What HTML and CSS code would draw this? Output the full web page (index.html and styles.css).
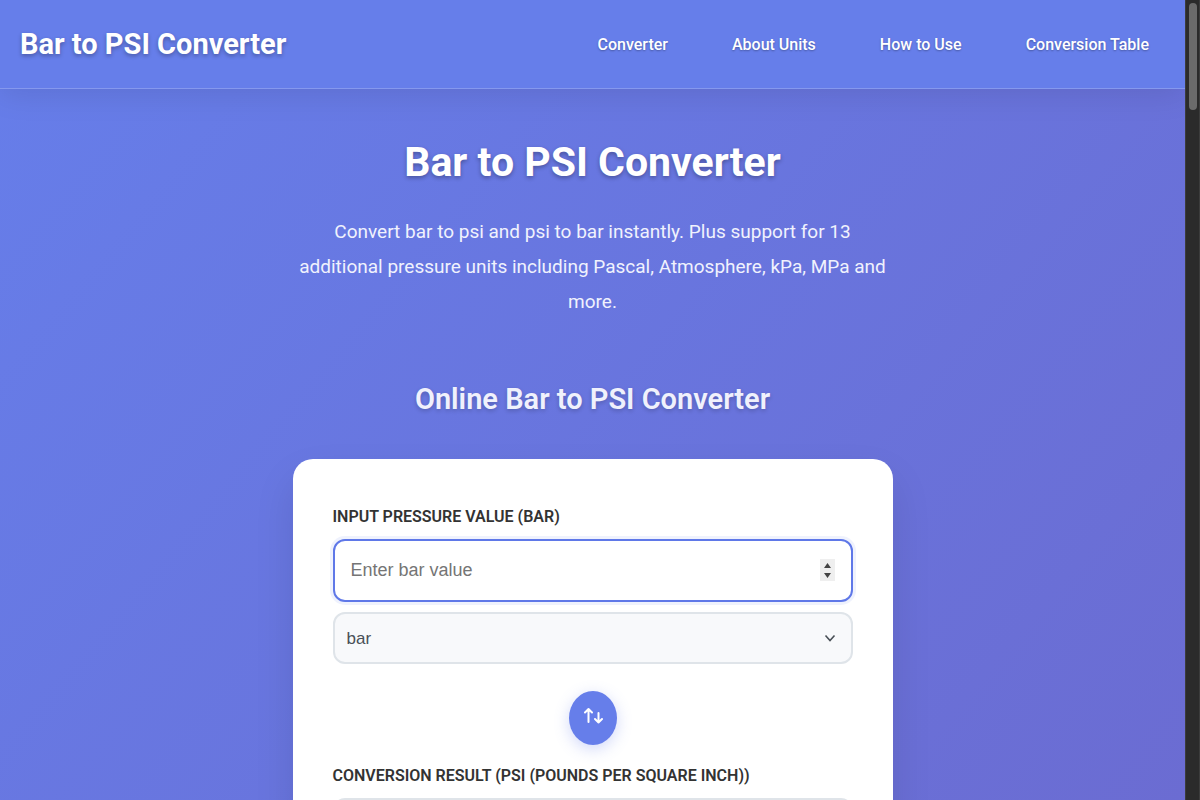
FILE: index.html
```html
<!DOCTYPE html>
<html lang="en">
<head>
<meta charset="utf-8">
<title>Bar to PSI Converter</title>
<link rel="stylesheet" href="styles.css">
</head>
<body>
<div class="page">
  <header class="header">
    <div class="logo">Bar to PSI Converter</div>
    <nav class="nav">
      <a href="#converter">Converter</a>
      <a href="#units">About Units</a>
      <a href="#how">How to Use</a>
      <a href="#table">Conversion Table</a>
    </nav>
  </header>
  <main class="main">
    <h1 class="title">Bar to PSI Converter</h1>
    <p class="subtitle">Convert bar to psi and psi to bar instantly. Plus support for 13 additional pressure units including Pascal, Atmosphere, kPa, MPa and more.</p>
    <h2 class="section-title">Online Bar to PSI Converter</h2>
    <form class="card" id="converter">
      <label class="label" for="value">Input pressure value (bar)</label>
      <div class="field">
        <input class="input active" id="value" type="number" placeholder="Enter bar value">
        <svg class="spinner" viewBox="0 0 15 22" aria-hidden="true"><path class="spinner-bg" d="M0 0h15v22H0z"/><path d="M4 9l3.500-5L11 9zM4 14h7l-3.500 5z"/></svg>
      </div>
      <div class="field">
        <select class="select" aria-label="Input unit"><option>bar</option><option>psi</option></select>
        <svg class="chevron" viewBox="0 0 12 10" aria-hidden="true"><path d="M1.500 2.500l4.500 5 4.500-5"/></svg>
      </div>
      <button class="swap" type="button" aria-label="Swap units">
        <svg viewBox="0 0 20 18" aria-hidden="true"><path d="M5.500 15V2.500M2 5.500l3.500-3.500L9 5.500M15.500 6v9.500M12 12l3.500 3.500 3.500-3.500"/></svg>
      </button>
      <label class="label" for="result">Conversion result (psi (pounds per square inch))</label>
      <input class="input" id="result" type="text" readonly>
    </form>
  </main>
</div>
<div class="scrollbar"><div class="thumb"></div></div>
</body>
</html>
```
FILE: styles.css
```css
* {
  box-sizing: border-box;
}

body {
  margin: 0;
  display: flex;
  height: 100vh;
  overflow: hidden;
  font-family: Roboto, "Liberation Sans", sans-serif;
  color: #333;
}

.page {
  flex: 1;
  min-width: 0;
  overflow: hidden;
  background: linear-gradient(130deg, #667eea 0%, #6b6cd2 100%);
}

.header {
  display: flex;
  align-items: center;
  justify-content: space-between;
  height: 89px;
  padding: 0 36px 0 20px;
  background: #667eea;
  border-bottom: 1px solid #8598ee;
  box-shadow: 0 4px 32px rgba(0, 0, 0, 0.1);
  color: #fff;
}

.logo {
  font-size: 29px;
  font-weight: 700;
  line-height: 36px;
  text-shadow: 0 2px 4px rgba(0, 0, 0, 0.3);
}

.nav {
  display: flex;
  gap: 64px;
}

.nav a {
  color: #fff;
  font-size: 16px;
  font-weight: 500;
  text-decoration: none;
  text-shadow: 0 1px 2px rgba(0, 0, 0, 0.3);
}

.main {
  display: flex;
  flex-direction: column;
  align-items: center;
  padding: 45px 20px;
}

.title {
  margin: 0 0 24px;
  font-size: 41px;
  line-height: 56px;
  color: #fff;
  text-shadow: 0 2px 4px rgba(0, 0, 0, 0.3);
}

.subtitle {
  max-width: 600px;
  margin: 0 0 56px;
  font-size: 19px;
  line-height: 35px;
  text-align: center;
  color: #f0f2fd;
}

.section-title {
  margin: 0 0 36px;
  font-size: 29px;
  font-weight: 600;
  line-height: 48px;
  color: #f0f1fc;
  text-shadow: 0 2px 4px rgba(0, 0, 0, 0.2);
}

.card {
  display: flex;
  flex-direction: column;
  width: 100%;
  max-width: 600px;
  padding: 44px 40px;
  background: #fff;
  border-radius: 20px;
  box-shadow: 0 20px 40px rgba(0, 0, 0, 0.1);
}

.label {
  margin-bottom: 8px;
  font-size: 16px;
  font-weight: 600;
  line-height: 28px;
  text-transform: uppercase;
}

.field {
  position: relative;
  display: flex;
  margin-bottom: 10px;
}

.input,
.select {
  width: 100%;
  appearance: none;
  border: 2px solid #dfe4e9;
  border-radius: 12px;
  outline: none;
  font-family: "Liberation Sans", Arial, sans-serif;
}

.input {
  height: 63px;
  padding: 0 16px;
  background: #f8f9fb;
  font-size: 18px;
}

.input.active {
  background: #fff;
  border-color: #5f78e8;
  box-shadow: 0 0 0 3px rgba(102, 126, 234, 0.1);
}

.input::-webkit-inner-spin-button {
  appearance: none;
}

.input::placeholder {
  color: #757575;
}

.select {
  height: 52px;
  padding: 0 12px;
  background: #f8f9fb;
  color: #495057;
  font-size: 17px;
}

.spinner {
  position: absolute;
  top: 20px;
  right: 18px;
  width: 15px;
  height: 22px;
  fill: #444;
}

.spinner-bg {
  fill: #efefef;
}

.chevron {
  position: absolute;
  top: 21px;
  right: 17px;
  width: 12px;
  height: 10px;
  fill: none;
  stroke: #495057;
  stroke-width: 1.6;
}

.swap {
  display: grid;
  place-items: center;
  align-self: center;
  width: 48px;
  height: 54px;
  margin: 17px 0;
  padding: 0 0 4px;
  border: 0;
  border-radius: 50%;
  background: #667eea;
  box-shadow: 0 4px 15px rgba(102, 126, 234, 0.3);
}

.swap svg {
  width: 20px;
  height: 18px;
  fill: none;
  stroke: #fff;
  stroke-width: 2;
  stroke-linecap: round;
  stroke-linejoin: round;
}

.scrollbar {
  width: 15px;
  padding: 3px 2px 0 3px;
  background: #2b2b2b;
  border-left: 1px solid #3c3c3c;
  border-right: 1px solid #3c3c3c;
}

.thumb {
  height: 107px;
  border-radius: 4px;
  background: #6b6b6b;
}
```
